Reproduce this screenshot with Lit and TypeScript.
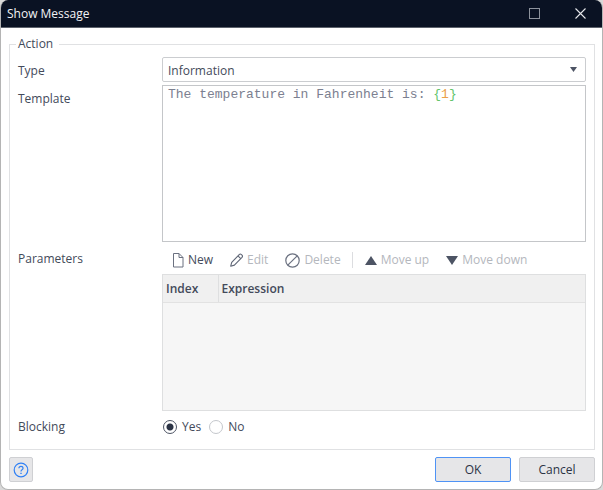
import { LitElement, html, css, svg } from "lit";
import { customElement, state } from "lit/decorators.js";

const icons = {
  maximize: svg`<rect x="0.5" y="0.5" width="10" height="10" fill="none" stroke="#8d929c"/>`,
  close: svg`<path d="M0.5 0.5 L10.5 10.5 M10.5 0.5 L0.5 10.5" fill="none" stroke="#e4e6ea" stroke-width="1.1"/>`,
};

@customElement("app-root")
export class AppRoot extends LitElement {
  @state() private template = "The temperature in Fahrenheit is: {1}";
  @state() private blocking = "yes";

  static styles = css`
    :host {
      display: flex;
      background: #d9d9d9;
      min-height: 100vh;
      font: 12px/16px "Open Sans", "Noto Sans", sans-serif;
      color: #434a5a;
    }
    * { box-sizing: border-box; }
    button, select, textarea, input { font: inherit; color: inherit; margin: 0; }
    .dialog {
      flex: 1;
      min-width: 0;
      display: flex;
      flex-direction: column;
      background: #fff;
      border: 1px solid #b4b4b4;
      border-top: 0;
      border-radius: 8px;
      overflow: hidden;
    }
    .titlebar {
      display: flex;
      align-items: center;
      gap: 2px;
      height: 28px;
      padding-left: 6px;
      background: #0a1223;
      border-bottom: 1px solid #5d626c;
      color: #f2f3f5;
    }
    h1 { flex: 1; margin: 0; font-size: 12px; font-weight: 400; }
    .winbtn {
      width: 44px;
      height: 27px;
      padding: 0;
      border: 0;
      background: none;
      display: grid;
      place-items: center;
    }
    svg { display: block; flex: none; }
    .body { flex: 1; display: flex; flex-direction: column; padding: 8px 7px 7px 8px; }
    fieldset {
      flex: 1;
      display: flex;
      flex-direction: column;
      min-width: 0;
      margin: 0;
      padding: 0 6px;
      border: 1px solid #e0e1e3;
    }
    legend { padding: 0 6px 0 2px; }
    .form {
      flex: 1;
      display: grid;
      grid-template-columns: 144px minmax(0, 1fr);
      grid-template-rows: auto auto 1fr auto;
      padding: 5px 2px 0;
    }
    .label { padding-top: 6px; }
    .select { position: relative; margin-bottom: 3px; }
    select {
      display: block;
      appearance: none;
      width: 100%;
      height: 25px;
      padding: 2px 5px 0;
      border: 1px solid #cbcdd0;
      border-radius: 2px;
      background: #fff;
    }
    .select svg { position: absolute; right: 9px; top: 10px; pointer-events: none; }
    .editor {
      display: grid;
      height: 157px;
      border: 1px solid #c4c6c9;
      font: 13px/16px "Liberation Mono", monospace;
    }
    .highlight, textarea {
      grid-area: 1 / 1;
      min-width: 0;
      padding: 1px 5px;
      font: inherit;
      white-space: pre-wrap;
      overflow-wrap: break-word;
    }
    .highlight { margin: 0; color: #7c8090; }
    .brace { color: #63c46b; }
    .num { color: #eba04a; }
    textarea {
      border: 0;
      outline: 0;
      resize: none;
      background: none;
      color: transparent;
      caret-color: #3b4354;
    }
    .top { padding-top: 9px; }
    .params { display: flex; flex-direction: column; }
    .toolbar { display: flex; align-items: center; height: 32px; padding: 4px 10px 0; gap: 17px; }
    .tool {
      display: flex;
      align-items: center;
      gap: 4px;
      padding: 0;
      border: 0;
      background: none;
      white-space: nowrap;
    }
    .tool:disabled { color: #b4b7bd; }
    .move { display: flex; gap: 17px; padding-left: 12px; border-left: 1px solid #dcdde0; margin-left: -6px; }
    .grid { flex: 1; min-height: 136px; border: 1px solid #dedfe0; background: #f6f6f6; }
    table { width: 100%; border-collapse: collapse; table-layout: fixed; background: #f0f0f0; }
    th {
      height: 27px;
      padding: 2px 3px 0;
      border-bottom: 1px solid #e2e2e2;
      text-align: left;
      font-weight: 600;
    }
    .index { width: 55px; border-right: 1px solid #dedfe0; }
    .radios { display: flex; align-items: center; gap: 8px; height: 38px; padding: 0 1px 6px; }
    .blocking { padding-top: 8px; }
    .radio { display: flex; align-items: center; gap: 5px; }
    input[type="radio"] {
      appearance: none;
      width: 14px;
      height: 14px;
      border: 1px solid #c4c7cc;
      border-radius: 50%;
      background: #fff;
    }
    input[type="radio"]:checked {
      border-color: #4d5464;
      background: radial-gradient(circle, #2b3345 3px, #fff 4px);
    }
    footer { display: flex; gap: 8px; padding: 0 7px 7px 8px; }
    .btn {
      width: 76px;
      height: 25px;
      padding: 1px 0 0;
      border: 1px solid #cfd0d3;
      border-radius: 2px;
      background: #e6e6e8;
      color: #2b3345;
    }
    .primary { border-color: #4f93f5; }
    .help { width: 24px; display: grid; place-items: center; margin-right: auto; }
  `;

  private highlighted() {
    return this.template.split(/(\{\d+\})/).map((part) =>
      /^\{\d+\}$/.test(part)
        ? html`<span class="brace">{</span><span class="num">${part.slice(1, -1)}</span><span class="brace">}</span>`
        : part
    );
  }

  render() {
    return html`<main class="dialog">
      <header class="titlebar">
        <h1>Show Message</h1>
        <button class="winbtn" aria-label="Maximize"><svg width="11" height="11">${icons.maximize}</svg></button>
        <button class="winbtn" aria-label="Close"><svg width="11" height="11">${icons.close}</svg></button>
      </header>
      <div class="body">
        <fieldset>
          <legend>Action</legend>
          <div class="form">
            <label class="label" for="type">Type</label>
            <div class="select">
              <select id="type"><option>Information</option><option>Warning</option><option>Error</option></select>
              <svg width="7" height="5"><path d="M0 0H7L3.5 5Z" fill="#4d5464"/></svg>
            </div>
            <label class="label" for="template">Template</label>
            <div class="editor">
              <pre class="highlight" aria-hidden="true">${this.highlighted()}</pre>
              <textarea id="template" spellcheck="false" .value=${this.template}
                @input=${(e: Event) => (this.template = (e.target as HTMLTextAreaElement).value)}></textarea>
            </div>
            <span class="top" id="params">Parameters</span>
            <div class="params">
              <div class="toolbar">
                <button class="tool">
                  <svg width="12" height="15" fill="none" stroke="#6b7180"><path d="M1.5 0.5H7L11 4.5V14H1.5Z M7 0.5V4.5H11"/></svg>New
                </button>
                <button class="tool" disabled>
                  <svg width="13" height="14" fill="none" stroke="#5f6676" stroke-width="1.1" stroke-linejoin="round"><path d="M0.7 13.2L1.7 9.4L9.2 1.6Q10.3 0.5 11.4 1.6L12 2.2Q13 3.3 12 4.4L4.4 12.1Z M8 2.9L10.7 5.6"/></svg>Edit
                </button>
                <button class="tool" disabled>
                  <svg width="15" height="15" fill="none" stroke="#6b7180" stroke-width="1.2"><circle cx="7.5" cy="7.5" r="6.7"/><path d="M12.2 2.8L2.8 12.2"/></svg>Delete
                </button>
                <div class="move">
                  <button class="tool" disabled>
                    <svg width="12" height="9"><path d="M6 0L12 9H0Z" fill="#4d5464"/></svg>Move up
                  </button>
                  <button class="tool" disabled>
                    <svg width="12" height="9"><path d="M0 0H12L6 9Z" fill="#4d5464"/></svg>Move down
                  </button>
                </div>
              </div>
              <div class="grid">
                <table aria-labelledby="params">
                  <thead><tr><th class="index" scope="col">Index</th><th scope="col">Expression</th></tr></thead>
                </table>
              </div>
            </div>
            <span class="blocking" id="blocking">Blocking</span>
            <div class="radios" role="radiogroup" aria-labelledby="blocking">
              ${["Yes", "No"].map((t) => html`<label class="radio"><input type="radio" name="blocking"
                .checked=${this.blocking === t.toLowerCase()}
                @change=${() => (this.blocking = t.toLowerCase())}>${t}</label>`)}
            </div>
          </div>
        </fieldset>
      </div>
      <footer>
        <button class="btn help" aria-label="Help">
          <svg width="16" height="16" fill="none" stroke="#2f80f5" stroke-width="1.2"><circle cx="8" cy="8" r="6.8"/><path d="M5.9 6.3Q6 4.3 8 4.3T10.1 6.1Q10.1 7.1 9 7.8Q8 8.4 8 9.6"/><path d="M8 10.8V12.1" stroke-width="1.4"/></svg>
        </button>
        <button class="btn primary">OK</button>
        <button class="btn">Cancel</button>
      </footer>
    </main>`;
  }
}
